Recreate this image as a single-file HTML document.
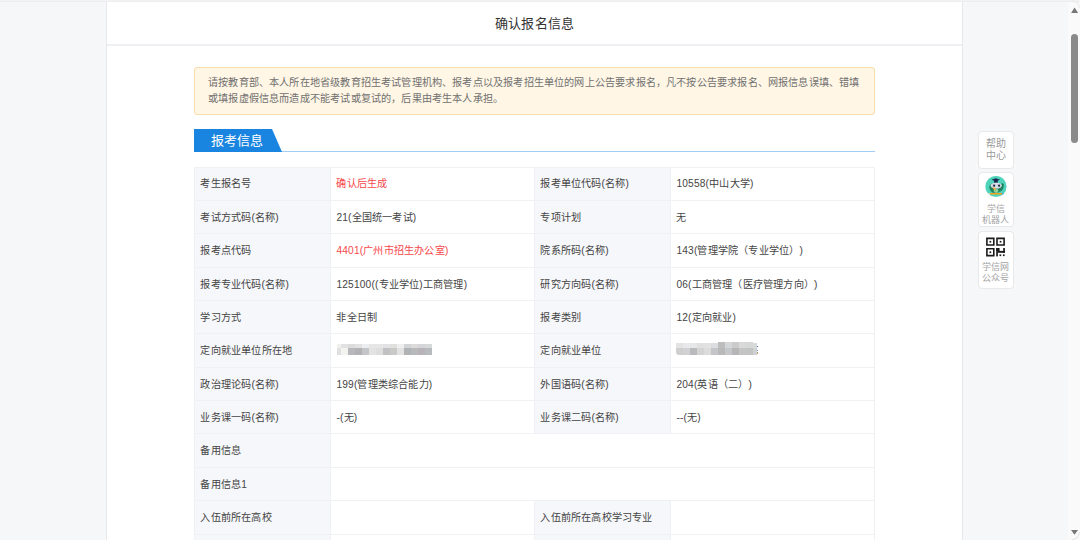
<!DOCTYPE html>
<html lang="zh-CN">
<head>
<meta charset="utf-8">
<style>
*{margin:0;padding:0;box-sizing:border-box;}
html,body{width:1080px;height:540px;overflow:hidden;}
body{background:#f6f7f9;font-family:"Liberation Sans",sans-serif;color:#333;position:relative;text-spacing-trim:space-all;}
.topstrip{position:absolute;left:0;top:0;width:1080px;height:2px;background:linear-gradient(#f4f4f4,#ececec);z-index:5;border-top-right-radius:3px;}
.main{position:absolute;left:106px;top:2px;width:857px;height:538px;background:#fff;border-left:1px solid #e6e8ec;border-right:1px solid #e6e8ec;}
.hd{position:absolute;left:0;top:0;width:855px;height:44px;line-height:44px;text-align:center;font-size:13px;letter-spacing:0.3px;text-indent:0.3px;color:#333;border-bottom:2px solid #eff0f3;}
.notice{position:absolute;left:87px;top:64.5px;width:681px;height:48.5px;background:#fff6e5;border:1px solid #fcdca8;border-radius:3px;padding:7.5px 0 0 13px;font-size:10.15px;letter-spacing:0.18px;line-height:15.6px;color:#707070;}
.sec{position:absolute;left:87px;top:124px;width:681px;height:26px;border-bottom:1px solid #a3cdf3;}
.tab{position:absolute;left:0;top:3px;height:23px;width:88px;}
.tab svg{position:absolute;left:0;top:0;}
.tab span{position:absolute;left:17px;top:0;line-height:23px;font-size:13px;color:#fff;}
table{position:absolute;left:87px;top:164.6px;width:680px;border-collapse:collapse;table-layout:fixed;font-size:10.15px;}
td{height:33.37px;border:1px solid #f0f1f4;padding:0 0 1.6px 5.4px;letter-spacing:0.2px;color:#444;white-space:nowrap;}
td.l{background:#f6f7fa;}
.red{color:#f5474b;}
.side{position:absolute;left:963px;top:0;width:106px;height:540px;background:#f6f7f9;}
.btn{position:absolute;left:14.5px;width:36.5px;background:#fff;border:1px solid #e9e9ea;border-radius:4px;text-align:center;font-size:10px;line-height:12px;color:#9a9a9a;}
.sb{position:absolute;left:1068px;top:0;width:12px;height:540px;background:#fafafa;}
.thumb{position:absolute;left:3px;top:34px;width:7px;height:109px;background:#8a8a8a;border-radius:3.5px;}
.blk{position:absolute;}
</style>
</head>
<body>
<div class="topstrip"></div>
<div class="main">
  <div class="hd">确认报名信息</div>
  <div class="notice">请按教育部、本人所在地省级教育招生考试管理机构、报考点以及报考招生单位的网上公告要求报名，凡不按公告要求报名、网报信息误填、错填<br>或填报虚假信息而造成不能考试或复试的，后果由考生本人承担。</div>
  <div class="sec"><div class="tab"><svg width="88" height="23" viewBox="0 0 88 23"><path d="M0 0H78L88 23H0Z" fill="#1a85e0"/></svg><span>报考信息</span></div></div>
  <table>
    <colgroup><col style="width:136px"><col style="width:204px"><col style="width:136px"><col style="width:204px"></colgroup>
    <tr><td class="l">考生报名号</td><td class="red">确认后生成</td><td class="l">报考单位代码(名称)</td><td>10558(中山大学)</td></tr>
    <tr><td class="l">考试方式码(名称)</td><td>21(全国统一考试)</td><td class="l">专项计划</td><td>无</td></tr>
    <tr><td class="l">报考点代码</td><td class="red">4401(广州市招生办公室)</td><td class="l">院系所码(名称)</td><td>143(管理学院（专业学位）)</td></tr>
    <tr><td class="l">报考专业代码(名称)</td><td>125100((专业学位)工商管理)</td><td class="l">研究方向码(名称)</td><td>06(工商管理（医疗管理方向）)</td></tr>
    <tr><td class="l">学习方式</td><td>非全日制</td><td class="l">报考类别</td><td>12(定向就业)</td></tr>
    <tr><td class="l">定向就业单位所在地</td><td></td><td class="l">定向就业单位</td><td></td></tr>
    <tr><td class="l">政治理论码(名称)</td><td>199(管理类综合能力)</td><td class="l">外国语码(名称)</td><td>204(英语（二）)</td></tr>
    <tr><td class="l">业务课一码(名称)</td><td>-(无)</td><td class="l">业务课二码(名称)</td><td>--(无)</td></tr>
    <tr><td class="l">备用信息</td><td colspan="3"></td></tr>
    <tr><td class="l">备用信息1</td><td colspan="3"></td></tr>
    <tr><td class="l">入伍前所在高校</td><td></td><td class="l">入伍前所在高校学习专业</td><td></td></tr>
    <tr><td class="l"></td><td></td><td class="l"></td><td></td></tr>
  </table>
</div>
<div class="side">
  <div class="btn" style="top:131px;height:38px;padding-top:6px;">帮助<br>中心</div>
  <div class="btn" style="top:172px;height:55px;padding-top:30.5px;font-size:9px;line-height:11px;color:#a3a3a3;">学信<br>机器人</div>
  <div class="btn" style="top:231px;height:58px;padding-top:30px;font-size:9px;line-height:11px;color:#a3a3a3;">学信网<br>公众号</div>
</div>
<div class="sb"><div class="thumb"></div></div>
<svg style="position:absolute;left:1068px;top:0" width="12" height="540" viewBox="0 0 12 540"><path d="M3.1 13H10.1L6.6 7.4Z" fill="#777"/><path d="M3 530H10L6.5 534.8Z" fill="#777"/></svg>
<svg style="position:absolute;left:983px;top:174px" width="26" height="26" viewBox="0 0 26 26">
<circle cx="13" cy="12.5" r="10.6" fill="#4fd4bb"/>
<path d="M17.5 10C19.8 8.6 21.2 9.2 20.8 12C20.4 15 18.8 17.5 16 18Z" fill="#1d8260"/>
<path d="M6.3 13.5C6 10.5 8.5 9 12.5 9C16.5 9 18.5 10.5 18 14C17.5 17.5 15.8 19 12.5 19C9 19 6.6 17 6.3 13.5Z" fill="#21865f"/>
<ellipse cx="13" cy="16.8" rx="2.4" ry="2.1" fill="#8fd09c"/>
<ellipse cx="13.2" cy="11.6" rx="5.6" ry="3" fill="#dfe7ef"/>
<circle cx="11.1" cy="11.6" r="1.9" fill="none" stroke="#b7c3cf" stroke-width="0.6"/>
<circle cx="16.1" cy="11.6" r="1.9" fill="none" stroke="#b7c3cf" stroke-width="0.6"/>
<circle cx="11.1" cy="11.7" r="1.1" fill="#1c2540"/>
<circle cx="16.1" cy="11.7" r="1.1" fill="#1c2540"/>
<path d="M9.2 13.6L13 14L11.6 16.6Z" fill="#f2a73a"/>
<path d="M8.4 5.8L12.8 4.3L17.1 5.8L12.8 7.3Z" fill="#1c2550"/>
<rect x="11" y="6.6" width="3.8" height="2" fill="#1c2550"/>
<rect x="7" y="19" width="12" height="1.5" fill="#f5a01e"/>
<rect x="19" y="19" width="1.4" height="1.5" fill="#4aa3e2"/>
<path d="M4.2 19.7L7 19L7 20.5Z" fill="#e6ddd0"/>
</svg>
<svg style="position:absolute;left:983px;top:234px" width="26" height="26" viewBox="0 0 26 26" fill="#1b1b1b">
<path fill-rule="evenodd" d="M3.1 3.6H11.6V11.8H3.1ZM4.7 5.2V10.2H10V5.2Z"/>
<path fill-rule="evenodd" d="M13.2 3.6H21.9V11.8H13.2ZM14.8 5.2V10.2H20.3V5.2Z"/>
<path fill-rule="evenodd" d="M3.1 14H11.6V22.4H3.1ZM4.7 15.6V20.8H10V15.6Z"/>
<rect x="6.5" y="6.9" width="1.7" height="1.7"/>
<rect x="16.7" y="6.9" width="1.7" height="1.7"/>
<rect x="6.5" y="17.4" width="1.7" height="1.7"/>
<rect x="13.2" y="14" width="3.4" height="3"/>
<rect x="13.2" y="14" width="1.7" height="8.4"/>
<rect x="20.2" y="14" width="1.7" height="4.8"/>
<rect x="14.9" y="16.9" width="7" height="1.9"/>
<rect x="16.5" y="20.4" width="1.7" height="1.7"/>
<rect x="19.9" y="20.4" width="1.7" height="1.7"/>
</svg>
<div class="mos"><div class="blk" style="left:337px;top:343.9px;width:4.4px;height:4px;background:#f0f0ef"></div><div class="blk" style="left:337px;top:347.9px;width:4.4px;height:7.1px;background:#dfe0e0"></div><div class="blk" style="left:341.4px;top:343.9px;width:6.7px;height:4px;background:#e2e2e3"></div><div class="blk" style="left:341.4px;top:347.9px;width:6.7px;height:7.1px;background:#f4f3ef"></div><div class="blk" style="left:348.1px;top:343.9px;width:7.0px;height:4px;background:#dcdcdd"></div><div class="blk" style="left:348.1px;top:347.9px;width:7.0px;height:7.1px;background:#b8b8ba"></div><div class="blk" style="left:355.1px;top:343.9px;width:6.9px;height:4px;background:#e4e1e2"></div><div class="blk" style="left:355.1px;top:347.9px;width:6.9px;height:7.1px;background:#b2b2b4"></div><div class="blk" style="left:362px;top:343.9px;width:7.2px;height:4px;background:#ebedf0"></div><div class="blk" style="left:362px;top:347.9px;width:7.2px;height:7.1px;background:#c4c5c8"></div><div class="blk" style="left:369.2px;top:343.9px;width:6.9px;height:4px;background:#e6e6e6"></div><div class="blk" style="left:369.2px;top:347.9px;width:6.9px;height:7.1px;background:#e3e3e3"></div><div class="blk" style="left:376.1px;top:343.9px;width:7.0px;height:4px;background:#e6e6e6"></div><div class="blk" style="left:376.1px;top:347.9px;width:7.0px;height:7.1px;background:#dededf"></div><div class="blk" style="left:383.1px;top:343.9px;width:6.9px;height:4px;background:#e2e2e4"></div><div class="blk" style="left:383.1px;top:347.9px;width:6.9px;height:7.1px;background:#c1c1c3"></div><div class="blk" style="left:390px;top:343.9px;width:7.0px;height:4px;background:#e0e0de"></div><div class="blk" style="left:390px;top:347.9px;width:7.0px;height:7.1px;background:#cbc9c8"></div><div class="blk" style="left:397px;top:343.9px;width:6.9px;height:4px;background:#efefef"></div><div class="blk" style="left:397px;top:347.9px;width:6.9px;height:7.1px;background:#e2e2e2"></div><div class="blk" style="left:403.9px;top:343.9px;width:7.0px;height:4px;background:#d3d4d6"></div><div class="blk" style="left:403.9px;top:347.9px;width:7.0px;height:7.1px;background:#b1b2b4"></div><div class="blk" style="left:410.9px;top:343.9px;width:7.1px;height:4px;background:#dcdbd9"></div><div class="blk" style="left:410.9px;top:347.9px;width:7.1px;height:7.1px;background:#b8b9bb"></div><div class="blk" style="left:418px;top:343.9px;width:7.0px;height:4px;background:#d6d5da"></div><div class="blk" style="left:418px;top:347.9px;width:7.0px;height:7.1px;background:#b8b3b8"></div><div class="blk" style="left:425px;top:343.9px;width:6.9px;height:4px;background:#d8d9db"></div><div class="blk" style="left:425px;top:347.9px;width:6.9px;height:7.1px;background:#b7bbbe"></div><div class="blk" style="left:675.9px;top:342.9px;width:7.2px;height:5.1px;background:#e3e3e4"></div><div class="blk" style="left:675.9px;top:348px;width:7.2px;height:6.7px;background:#cfcfd0;border-bottom-left-radius:3px"></div><div class="blk" style="left:683.1px;top:342.9px;width:6.7px;height:5.1px;background:#e9e9eb"></div><div class="blk" style="left:683.1px;top:348px;width:6.7px;height:6.7px;background:#d2d1d3"></div><div class="blk" style="left:689.8px;top:342.9px;width:7.0px;height:5.1px;background:#e6e7e7"></div><div class="blk" style="left:689.8px;top:348px;width:7.0px;height:6.7px;background:#b9babc"></div><div class="blk" style="left:696.8px;top:342.9px;width:7.1px;height:5.1px;background:#e0e0e0"></div><div class="blk" style="left:696.8px;top:348px;width:7.1px;height:6.7px;background:#d3d3d3"></div><div class="blk" style="left:703.9px;top:342.9px;width:7.0px;height:5.1px;background:#e2e2e2"></div><div class="blk" style="left:703.9px;top:348px;width:7.0px;height:6.7px;background:#dcdcdc"></div><div class="blk" style="left:710.9px;top:342.9px;width:6.9px;height:5.1px;background:#dcdde0"></div><div class="blk" style="left:710.9px;top:348px;width:6.9px;height:6.7px;background:#c4c5c9"></div><div class="blk" style="left:717.8px;top:342.2px;width:6.9px;height:5.8px;background:#bdbdbd"></div><div class="blk" style="left:717.8px;top:348px;width:6.9px;height:6.7px;background:#b9b9b9"></div><div class="blk" style="left:724.7px;top:341.5px;width:7.0px;height:6.5px;background:#d5d6d8"></div><div class="blk" style="left:724.7px;top:348px;width:7.0px;height:6.7px;background:#c6c7cb"></div><div class="blk" style="left:731.7px;top:341.5px;width:6.9px;height:6.5px;background:#cbcbcb"></div><div class="blk" style="left:731.7px;top:348px;width:6.9px;height:6.7px;background:#b5b6b5"></div><div class="blk" style="left:738.6px;top:341.5px;width:7.2px;height:6.5px;background:#d9d9d9"></div><div class="blk" style="left:738.6px;top:348px;width:7.2px;height:6.7px;background:#c4c4c4"></div><div class="blk" style="left:745.8px;top:341.5px;width:7.4px;height:6.5px;background:#d6d7d7"></div><div class="blk" style="left:745.8px;top:348px;width:7.4px;height:6.7px;background:#c3c3c3"></div><div class="blk" style="left:753.2px;top:342.9px;width:3.7px;height:5.1px;background:#d8d9da"></div><div class="blk" style="left:753.2px;top:348px;width:3.7px;height:6.7px;background:#cfd1d2"></div></div>

<div class="blk" style="left:756.8px;top:345.8px;width:1.4px;height:1.6px;background:#3d5cb0"></div>
<div class="blk" style="left:756.8px;top:349.9px;width:1.2px;height:1px;background:#7d95cc"></div>
<div class="blk" style="left:756.8px;top:352.3px;width:1.4px;height:1.8px;background:#b89a6a"></div>
<div style="position:absolute;right:0;top:0;width:8px;height:8px;border-top:2px solid #ededed;border-right:1px solid #ededed;border-top-right-radius:8px;z-index:6"></div>
<div style="position:absolute;right:0;bottom:0;width:8px;height:8px;border-bottom:1px solid #e6e6e6;border-right:1px solid #e6e6e6;border-bottom-right-radius:8px;z-index:6"></div>
</body>
</html>
